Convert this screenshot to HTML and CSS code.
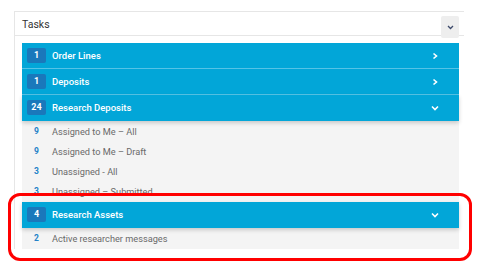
FILE: index.html
```html
<!DOCTYPE html>
<html lang="en">
  <head>
    <meta charset="UTF-8" />
    <title>Tasks</title>
    <link rel="stylesheet" href="styles.css">
  </head>
  <body>
    <div class="page">
      <div class="panel">
        <div class="panel-head">
          <span class="panel-title">Tasks</span>
          <button class="collapse-btn">
            <svg width="7" height="5" viewBox="0 0 7 5"><path d="M1 1l2.5 2.5L6 1" fill="none" stroke="#3d4a6b" stroke-width="1.3"/></svg>
          </button>
        </div>

        <div class="panel-body">
          <!-- collapsed groups -->
          <div class="group">
            <div class="group-head">
              <span class="badge">1</span>
              <span class="group-name">Order Lines</span>
              <svg class="chev" width="8" height="8" viewBox="0 0 8 8"><path d="M2.5 1.5L5.5 4l-3 2.5" fill="none" stroke="#fff" stroke-width="1.6"/></svg>
            </div>
          </div>

          <div class="group">
            <div class="group-head">
              <span class="badge">1</span>
              <span class="group-name">Deposits</span>
              <svg class="chev" width="8" height="8" viewBox="0 0 8 8"><path d="M2.5 1.5L5.5 4l-3 2.5" fill="none" stroke="#fff" stroke-width="1.6"/></svg>
            </div>
          </div>

          <!-- expanded groups -->
          <div class="group open">
            <div class="group-head">
              <span class="badge">24</span>
              <span class="group-name">Research Deposits</span>
              <svg class="chev" width="8" height="8" viewBox="0 0 8 8"><path d="M1 2.5L4 5.5l3-3" fill="none" stroke="#fff" stroke-width="1.6"/></svg>
            </div>
            <ul class="task-list">
              <li><span class="count">9</span>Assigned to Me – All</li>
              <li><span class="count">9</span>Assigned to Me – Draft</li>
              <li><span class="count">3</span>Unassigned - All</li>
              <li><span class="count">3</span>Unassigned – Submitted</li>
            </ul>
          </div>

          <div class="group open">
            <div class="group-head">
              <span class="badge">4</span>
              <span class="group-name">Research Assets</span>
              <svg class="chev" width="8" height="8" viewBox="0 0 8 8"><path d="M1 2.5L4 5.5l3-3" fill="none" stroke="#fff" stroke-width="1.6"/></svg>
            </div>
            <ul class="task-list">
              <li><span class="count">2</span>Active researcher messages</li>
            </ul>
          </div>
        </div>
      </div>

      <div class="highlight"></div>
    </div>
  </body>
</html>
```

FILE: styles.css
```css
body {
  margin: 0;
  background: #fff;
  font-family: Roboto, "Noto Sans", Arial, sans-serif;
}

.page {
  position: relative;
  width: 481px;
  height: 271px;
  padding: 11px 0 0 14px;
  box-sizing: border-box;
}

.panel {
  width: 449px;
  border-top: 1px solid #e6e6e6;
  border-left: 1px solid #e6e6e6;
}

.panel-head {
  display: flex;
  align-items: flex-start;
  height: 23px;
  border-bottom: 1px solid #e6e6e6;
}

.panel-title {
  flex: 1;
  padding: 6px 0 0 7px;
  font-size: 10.5px;
  color: #333;
}

.collapse-btn {
  width: 18px;
  height: 22px;
  margin: 4px 5px 0 0;
  padding: 0;
  border: none;
  border-radius: 2px;
  background: #eeeeee;
  display: flex;
  align-items: center;
  justify-content: center;
}

.panel-body {
  padding: 7px 5px 0 7px;
}

.group-head {
  display: flex;
  align-items: center;
  height: 25px;
  padding: 0 0 0 5px;
  background: #02a6d8;
  border-bottom: 1px solid #55c3e6;
  color: #fff;
}

.group.open .group-head {
  position: relative;
  box-shadow: 0 2px 4px rgba(0, 0, 0, 0.18);
  border-bottom-color: #02a6d8;
}

.badge {
  width: 19px;
  height: 15px;
  line-height: 15px;
  border-radius: 2px;
  background: #1a78bb;
  text-align: center;
  font-size: 9px;
  font-weight: 700;
}

.group-name {
  flex: 1;
  margin-left: 6px;
  font-size: 9.5px;
  font-weight: 500;
}

.chev {
  margin-right: 20px;
}

.task-list {
  list-style: none;
  margin: 0;
  padding: 0 0 1px;
  background: #f4f4f4;
}

.task-list li {
  display: flex;
  align-items: center;
  height: 20px;
  padding-left: 5px;
  font-size: 9.2px;
  color: #6a6a6a;
}

.count {
  width: 19px;
  margin-right: 6px;
  text-align: center;
  font-size: 8.5px;
  font-weight: 700;
  color: #2382c8;
}

/* annotation */
.highlight {
  position: absolute;
  left: 8px;
  top: 193px;
  width: 464px;
  height: 68px;
  box-sizing: border-box;
  border: 3px solid #f00;
  border-radius: 12px;
}
```
